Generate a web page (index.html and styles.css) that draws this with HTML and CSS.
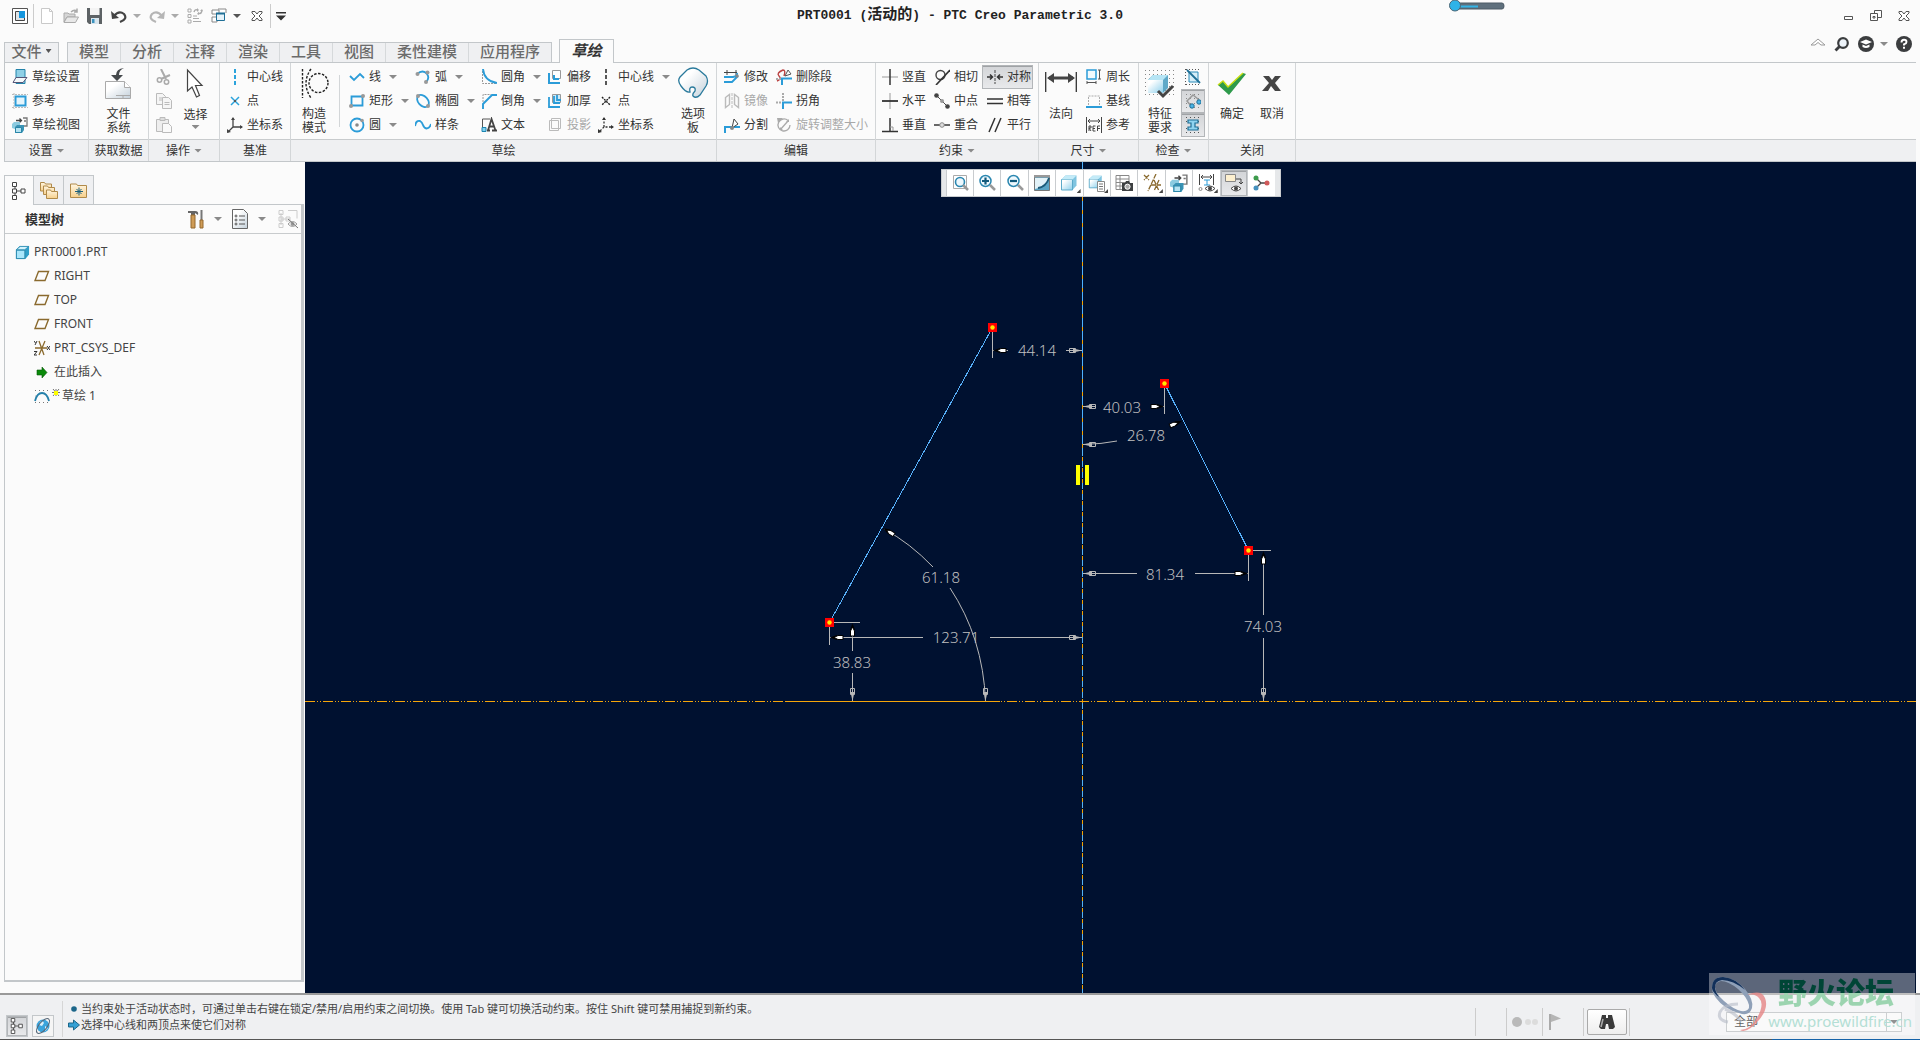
FILE: index.html
```html
<!DOCTYPE html>
<html lang="zh-CN">
<head>
<meta charset="utf-8">
<title>PRT0001 (活动的) - PTC Creo Parametric 3.0</title>
<link rel="stylesheet" href="styles.css">
</head>
<body>
<svg class="defs" aria-hidden="true">
  <defs>
    <linearGradient id="gPaper" x1="0" y1="0" x2="1" y2="1"><stop offset="0.3" stop-color="#fff"/><stop offset="1" stop-color="#c3d0da"/></linearGradient>
    <linearGradient id="gCube" x1="0" y1="0" x2="1" y2="1"><stop offset="0.2" stop-color="#fff"/><stop offset="1" stop-color="#8ed0ec"/></linearGradient>
    <linearGradient id="gFolder" x1="0" y1="0" x2="0" y2="1"><stop offset="0" stop-color="#fff6e2"/><stop offset="1" stop-color="#f6cf8a"/></linearGradient>
    <symbol id="cube" viewBox="0 0 18 18"><path d="M1.500 5.500l4-4h11v10l-4 4.500h-11z" fill="#7fc4e0"/><path d="M1.500 5.500h11v10.500h-11z" fill="url(#gCube)" stroke="#5ba9c9"/><path d="M1.500 5.500l4-4h11l-4 4z" fill="#c4ebf8"/></symbol>
    <symbol id="part" viewBox="0 0 16 16"><path d="M1 5l4-4h10v9l-4 5H1z" fill="#2f9fc9"/><path d="M1.500 5.500h9v9h-9z" fill="#a9e6fb" stroke="#2a87ac"/><path d="M1.500 5l4-3.500h9l-4 3.500z" fill="#d2f3fd" stroke="#2a87ac" stroke-width=".8"/></symbol>
    <symbol id="plane" viewBox="0 0 16 16"><path d="M4.500 3.500h10l-3.500 9h-10z" fill="none" stroke="#8a6a2e" stroke-width="1.400"/></symbol>
    <symbol id="treeicon" viewBox="0 0 14 18"><path d="M3 4v10M3 9h7" stroke="#444" fill="none"/><path d="M.5.500h4v4h-4zM.5 7h4v4h-4zM.5 13.500h4v4h-4zM9 7h4v4h-4z" fill="#fff" stroke="#444"/></symbol>
    <symbol id="views" viewBox="0 0 16 16"><path d="M4 3.500h5M7.500 1.500l2 2-2 2" stroke="#444" fill="none" stroke-width="1.300"/><path d="M11 1h4v8h-4M12 4h2" stroke="#777" fill="none" stroke-width="1.300"/><path d="M0 7l2-2h6v6l-2 2-6-2z" fill="#8ccbe0"/><path d="M3 10l2-2h7v5l-2 3H3z" fill="#3a93b5"/><path d="M3.500 10.500h6v5h-6z" fill="#b5e3f2" stroke="#2a86a8"/></symbol>
    <symbol id="csys" viewBox="0 0 16 16"><path d="M6 1v9M6 10h9M6 10l-5 5" stroke="#444" stroke-width="1.300" fill="none"/><path d="M6 0l2 3H4zM16 10l-3 2V8zM0 16v-4l4 3z" fill="#444"/></symbol>
    <g id="refArrow"><path d="M0 0L9-2V2z" fill="#b8b8b8"/><path d="M6.500-2h6v4h-6z" fill="none" stroke="#b8b8b8"/></g>
    <g id="dimArrow"><path d="M0 0L7-2.500V2.500z" fill="#000"/><path d="M4 0L8-2h5v4H8z" fill="#fff" stroke="#000"/></g>
  </defs>
</svg>

<header class="titlebar">
  <div class="qat">
    <button class="qb" aria-label="Creo"><svg class="i" viewBox="0 0 16 16"><path d="M.5.500h15v15H.5z" fill="#fff" stroke="#555"/><path d="M3.500 3.500h9v9h-9z" fill="#dfe3e6" stroke="#444"/><path d="M7 3h6v7H7z" fill="#1495dd"/></svg></button>
    <span class="vsep"></span>
    <button class="qb" aria-label="新建"><svg class="i" viewBox="0 0 16 16"><path d="M2.500.500h8l3 3v12h-11z" fill="#fff" stroke="#c9c9c9"/><path d="M10.500.500v3h3" fill="none" stroke="#c9c9c9"/></svg></button>
    <button class="qb open" aria-label="打开"><svg class="i" viewBox="0 0 16 16"><path d="M1 5h4l1 1h6v3H4l-3 5z" fill="#d6d6d6" stroke="#aaa"/><path d="M1 14.500l3-5.500h11.500l-3 5.500z" fill="#e8e8e8" stroke="#aaa"/><path d="M8 4q3-3 6-1M14 .5v3.500h-3" fill="none" stroke="#aaa" stroke-width="1.500"/></svg></button>
    <button class="qb save" aria-label="保存"><svg class="i" viewBox="0 0 16 16"><path d="M0 0h15v16H2l-2-2z" fill="#5d6265"/><path d="M3 0h9.500v7H3z" fill="#f4f4f4"/><path d="M4 10h8v6H4z" fill="#d9e6ee"/><path d="M5 11h2.500v4H5z" fill="#3b93c0"/></svg></button>
    <button class="qb" aria-label="撤消"><svg class="i" viewBox="0 0 16 16"><path d="M3 8q5-6 10-2 4 5-4 8" fill="none" stroke="#444" stroke-width="2.200"/><path d="M0 3l1 8 7-1z" fill="#444"/></svg><span class="caret lt"></span></button>
    <button class="qb" aria-label="重做"><svg class="i" viewBox="0 0 16 16"><path d="M13 8q-5-6-10-2-4 5 4 8" fill="none" stroke="#b5b5b5" stroke-width="2.200"/><path d="M16 3l-1 8-7-1z" fill="#b5b5b5"/></svg><span class="caret lt"></span></button>
    <button class="qb" aria-label="重新生成"><svg class="i" viewBox="0 0 16 16"><path d="M1 1h3v3H1zM1 6.500h3v3H1zM1 12h3v3H1zM6 8h4M6 13.500h8M6 10.500h6" stroke="#aaa" fill="none"/><path d="M7 4q1-3 3-2M15 3q-1 3-3 2.500" stroke="#aaa" fill="none" stroke-width="1.500"/><path d="M10 0v4l2-2zM12 7V3.500L10 6zM15 1l-2 2h3z" fill="#aaa"/></svg></button>
    <button class="qb win" aria-label="窗口"><svg class="i" viewBox="0 0 16 16"><path d="M1 2h7v4H1zM1 9h5v5H1zM7 1h8v4" fill="#fff" stroke="#888"/><path d="M5.500 5.500h8v7h-8z" fill="#e6f3fa" stroke="#1f6f96"/><path d="M5 4.500h9v2H5z" fill="#1f6f96"/></svg><span class="caret dk"></span></button>
    <button class="qb" aria-label="关闭"><svg class="i" viewBox="0 0 16 16"><path d="M3 3.500h3l2 2.500 2-2.500h3v1.500l-3 3 3 3v1.500h-3l-2-2.500-2 2.500H3V11l3-3-3-3z" fill="#fff" stroke="#555"/></svg></button>
    <span class="vsep"></span>
    <button class="qb" aria-label="自定义"><span class="caret barred"></span></button>
  </div>
  <h1 class="title">PRT0001 (<span class="cjk">活动的</span>) - PTC Creo Parametric 3.0</h1>
  <div class="slider"><svg viewBox="0 0 56 14" width="56" height="14"><path d="M8 3h45q2 0 2 3t-2 3H8z" fill="#5f707d" stroke="#4c5a66"/><path d="M8 5.500h21v2H8z" fill="#33b5e8"/><circle cx="6" cy="5.500" r="5.500" fill="#2fb3e8" stroke="#4c6675"/></svg></div>
  <div class="winctl">
    <button aria-label="最小化"><svg class="i" viewBox="0 0 16 16"><path d="M4.500 8.500h8v3h-8z" fill="#fff" stroke="#555"/></svg></button>
    <button aria-label="还原"><svg class="i" viewBox="0 0 16 16"><path d="M6.500 2.500h7v7h-7z" fill="#fff" stroke="#555"/><path d="M2.500 5.500h7v7h-7z" fill="#fff" stroke="#555"/><path d="M5 8.500h2v1.500H5z" fill="#fff" stroke="#555"/></svg></button>
    <button aria-label="关闭窗口"><svg class="i" viewBox="0 0 16 16"><path d="M3 3.500h3l2 2.500 2-2.500h3v1.500l-3 3 3 3v1.500h-3l-2-2.500-2 2.500H3V11l3-3-3-3z" fill="#fff" stroke="#555"/></svg></button>
  </div>
</header>

<nav class="tabrow">
  <button class="filetab">文件<span class="caret dk"></span></button>
  <div class="tabs" role="tablist">
    <button role="tab">模型</button><button role="tab">分析</button><button role="tab">注释</button><button role="tab">渲染</button><button role="tab">工具</button><button role="tab">视图</button><button role="tab">柔性建模</button><button role="tab">应用程序</button>
  </div>
  <button class="acttab" role="tab" aria-selected="true">草绘</button>
  <div class="helpers">
    <button aria-label="折叠功能区"><svg class="i" viewBox="0 0 16 16"><path d="M1 9l7-6 7 6h-4L8 6.500 5 9z" fill="#fff" stroke="#999"/></svg></button>
    <button aria-label="搜索"><svg class="i" viewBox="0 0 16 16"><circle cx="9" cy="7" r="4.800" fill="#eef4fa" stroke="#3b3d3f" stroke-width="2.200"/><path d="M5.500 10.500l-4 4" stroke="#3b3d3f" stroke-width="2.800"/></svg></button>
    <button class="learn" aria-label="学习"><svg class="i" viewBox="0 0 16 16"><circle cx="8" cy="8" r="8" fill="#3b3d3f"/><path d="M8 3.500l6 2.500-6 2.500L2 6zM4.500 8.500l3.500 1.500 3.500-1.500v2.500q-3.500 2-7 0z" fill="#fff"/></svg><span class="caret"></span></button>
    <button aria-label="帮助"><svg class="i" viewBox="0 0 16 16"><circle cx="8" cy="8" r="8" fill="#3b3d3f"/><path d="M5.500 6.500q0-2.700 2.500-2.700t2.500 2.200Q10.500 7.500 8 8.300v1.200" fill="none" stroke="#fff" stroke-width="1.900"/><path d="M7 10.800h2v2H7z" fill="#fff"/></svg></button>
  </div>
</nav>

<section class="ribbon">
  <div class="group g1"><div class="gbody"><div class="rows">
    <button class="cmd"><svg class="i" viewBox="0 0 16 16"><path d="M4 .5h9v14H4z" fill="#8fd0e6" stroke="#2383aa"/><path d="M4 8.500h11l-4 5H1z" fill="#f4f8fa" stroke="#557"/></svg>草绘设置</button>
    <button class="cmd"><svg class="i" viewBox="0 0 16 16"><path d="M3.500 3.500h10v9h-10z" fill="#e5f5fc" stroke="#2b9cd8" stroke-width="2"/><path d="M0 1.500h16M0 14.500h16M2 0v16" stroke="#bbb" stroke-dasharray="2 1" fill="none"/></svg>参考</button>
    <button class="cmd"><svg class="i"><use href="#views"/></svg>草绘视图</button>
  </div></div><button class="glabel">设置<span class="caret"></span></button></div>

  <div class="group g2"><div class="gbody">
    <button class="big"><svg class="bi" viewBox="0 0 32 32"><path d="M2.500 14.500h19l6 6v11h-25z" fill="url(#gPaper)" stroke="#aaa"/><path d="M21.500 14.500v6h6" fill="#fff" stroke="#aaa"/><path d="M13 28.500h15M20 28.500v3" stroke="#aaa"/><path d="M21 1Q13 2 13 8H8l6 6 6-6h-4q0-5 5-7z" fill="#45494c"/></svg>文件<br>系统</button>
  </div><div class="glabel">获取数据</div></div>

  <div class="group g3"><div class="gbody"><div class="rows">
    <button class="cmd" aria-label="剪切"><svg class="i" viewBox="0 0 16 16"><path d="M5 0l5 10M14 6L5 10" stroke="#aaa" stroke-width="2"/><circle cx="3.500" cy="11" r="2.200" fill="none" stroke="#aaa" stroke-width="1.500"/><circle cx="10.500" cy="13" r="2.200" fill="none" stroke="#aaa" stroke-width="1.500"/></svg></button>
    <button class="cmd" aria-label="复制"><svg class="i" viewBox="0 0 16 16"><path d="M.5.500h6l3 3v8h-9z" fill="#f5f5f5" stroke="#bbb"/><path d="M6.500 4.500h6l3 3v8h-9z" fill="#f5f5f5" stroke="#bbb"/><path d="M3 5h3M3 7h3M8.500 9.500h5M8.500 11.500h5" stroke="#bbb"/></svg></button>
    <button class="cmd" aria-label="粘贴"><svg class="i" viewBox="0 0 16 16"><path d="M.5 2.500h12v12H.5z" fill="#eee" stroke="#bbb"/><path d="M4 .5h5v3H4z" fill="#ddd" stroke="#bbb"/><path d="M6.500 6.500h6l3 3v6h-9z" fill="#fafafa" stroke="#bbb"/></svg></button>
    </div>
    <button class="big sel"><svg class="bi" viewBox="0 0 32 32"><path d="M7.500 3v21l4.500-4 4.500 10 3-1.500L15.500 18.500H22z" fill="#fff" stroke="#444" stroke-width="1.200"/></svg>选择<span class="caret"></span></button>
  </div><button class="glabel">操作<span class="caret"></span></button></div>

  <div class="group g4"><div class="gbody"><div class="rows">
    <button class="cmd"><svg class="i" viewBox="0 0 16 16"><path d="M8 0v16" stroke="#2ba3dc" stroke-width="2" stroke-dasharray="4 2"/></svg>中心线</button>
    <button class="cmd"><svg class="i" viewBox="0 0 16 16"><path d="M4 4l8 8M12 4l-8 8" stroke="#2ba3dc" stroke-width="1.500"/><path d="M7 7h2v2H7z" fill="#555"/></svg>点</button>
    <button class="cmd"><svg class="i"><use href="#csys"/></svg>坐标系</button>
  </div></div><div class="glabel">基准</div></div>

  <div class="group g5"><div class="gbody">
    <button class="big cons"><svg class="bi" viewBox="0 0 32 32"><g fill="none" stroke="#222" stroke-width="1.400" stroke-dasharray="2.500 1.500"><path d="M4.500 2v29M13 2q-10 14 0 29"/><circle cx="20.500" cy="16" r="9.500"/></g></svg>构造<br>模式</button>
    <span class="gsep"></span>
    <div class="rows sk">
      <button class="cmd"><svg class="i" viewBox="0 0 16 16"><path d="M1 7l4 4 6-6 4 4" fill="none" stroke="#2b9cd8" stroke-width="1.800"/></svg>线<span class="caret"></span></button>
      <button class="cmd"><svg class="i" viewBox="0 0 16 16"><path d="M2.500 3.500h11v9h-11z" fill="none" stroke="#2b9cd8" stroke-width="1.800"/><circle cx="2" cy="13" r="2" fill="#999"/><circle cx="14" cy="3" r="2" fill="#999"/></svg>矩形<span class="caret"></span></button>
      <button class="cmd"><svg class="i" viewBox="0 0 16 16"><circle cx="8" cy="8" r="6.500" fill="none" stroke="#2b9cd8" stroke-width="1.800"/><circle cx="8" cy="8" r="1.800" fill="#888"/><circle cx="13" cy="3.500" r="1.800" fill="#999"/></svg>圆<span class="caret"></span></button>
      <button class="cmd"><svg class="i" viewBox="0 0 16 16"><path d="M2 5q6-5 10 0 3 4-1 8" fill="none" stroke="#2b9cd8" stroke-width="1.800"/><circle cx="2.500" cy="5" r="2" fill="#999"/><circle cx="12.500" cy="3.500" r="2" fill="#999"/><circle cx="11" cy="13" r="2" fill="#999"/></svg>弧<span class="caret"></span></button>
      <button class="cmd"><svg class="i" viewBox="0 0 16 16"><ellipse cx="8" cy="8" rx="7" ry="4.800" transform="rotate(48 8 8)" fill="none" stroke="#2b9cd8" stroke-width="1.800"/><circle cx="3" cy="3" r="2" fill="#999"/><circle cx="13" cy="13" r="2" fill="#999"/></svg>椭圆<span class="caret"></span></button>
      <button class="cmd"><svg class="i" viewBox="0 0 16 16"><path d="M0 9q1-6 5-5 2 1 3 4t3.500 3.500Q15 11 16 7" fill="none" stroke="#2b9cd8" stroke-width="1.900"/></svg>样条</button>
      <button class="cmd"><svg class="i" viewBox="0 0 16 16"><path d="M1.500 2v12.500H16" stroke="#999" stroke-dasharray="2 1" fill="none"/><path d="M2 0q1 12 14 14" fill="none" stroke="#2b9cd8" stroke-width="1.900"/></svg>圆角<span class="caret"></span></button>
      <button class="cmd"><svg class="i" viewBox="0 0 16 16"><path d="M2 9V1.500h8" stroke="#999" stroke-dasharray="2 1" fill="none"/><path d="M2 16V11L11 2h5" fill="none" stroke="#2b9cd8" stroke-width="1.900"/></svg>倒角<span class="caret"></span></button>
      <button class="cmd"><svg class="i" viewBox="0 0 16 16"><path d="M1.500 11V2H9" stroke="#555" fill="none"/><path d="M1 10.500h4v4H1z" fill="#7fd0f0" stroke="#1d84b0"/><path d="M6 13.500h3M11 13.500h5M7 13.500L10.500 2l4 11.500M8 9.500h5" stroke="#444" stroke-width="1.800" fill="none"/></svg>文本</button>
      <button class="cmd"><svg class="i" viewBox="0 0 16 16"><path d="M5.500 1.500h8v8h-8z" fill="#fff" stroke="#999"/><path d="M2 4v10h11M7 6v4h5" fill="none" stroke="#2b9cd8" stroke-width="2"/></svg>偏移</button>
      <button class="cmd"><svg class="i" viewBox="0 0 16 16"><path d="M5.500 1.500h8v8h-8z" fill="#cdeaf7" stroke="#999"/><path d="M2 4v10h11M7 3v7h6M10 2v5h4" fill="none" stroke="#2b9cd8" stroke-width="1.800"/></svg>加厚</button>
      <button class="cmd" disabled><svg class="i" viewBox="0 0 16 16"><path d="M2.500 3.500h9v10h-9zM4.500 1.500h9v10h-9z" fill="none" stroke="#bbb"/></svg>投影</button>
      <button class="cmd"><svg class="i" viewBox="0 0 16 16"><path d="M8 0v16" stroke="#222" stroke-width="1.500" stroke-dasharray="4 2"/></svg>中心线<span class="caret"></span></button>
      <button class="cmd"><svg class="i" viewBox="0 0 16 16"><path d="M4 4l8 8M12 4l-8 8" stroke="#222" stroke-width="1.400" stroke-dasharray="2 1"/></svg>点</button>
      <button class="cmd"><svg class="i" viewBox="0 0 16 16"><path d="M6 1v9h9M6 10l-5 5" stroke="#333" stroke-dasharray="2 1.500" stroke-width="1.300" fill="none"/><path d="M6 0l2 3H4zM16 10l-3 2V8zM0 16v-4l4 3z" fill="#333"/></svg>坐标系</button>
    </div>
    <button class="big pal"><svg class="bi" viewBox="0 0 32 32"><path d="M10 3q6-4 12 0l7 6q3 5 0 10l-6 9q-4 4-7 1-1-2 2-5 1-4-3-4-3 0-2 5-4 1-9-6-4-5-1-9z" fill="url(#gPaper)" stroke="#2a7a9c" stroke-width="1.300"/></svg>选项<br>板</button>
  </div><div class="glabel">草绘</div></div>

  <div class="group g6"><div class="gbody"><div class="rows ed">
    <button class="cmd"><svg class="i" viewBox="0 0 16 16"><path d="M0 3.500h13M3 1v5M12 1v5" stroke="#444" fill="none"/><path d="M0 8h9q5-1 4-4M0 13h8l6-6" stroke="#2b9cd8" stroke-width="1.800" fill="none"/><circle cx="13" cy="7" r="1.800" fill="#888"/></svg>修改</button>
    <button class="cmd" disabled><svg class="i" viewBox="0 0 16 16"><path d="M1.500 4.500l4-3v10l-4 3zM14.500 4.500l-4-3v10l4 3z" fill="none" stroke="#bbb" stroke-width="1.400"/><path d="M8 0v16" stroke="#bbb" stroke-dasharray="3 1"/></svg>镜像</button>
    <button class="cmd"><svg class="i" viewBox="0 0 16 16"><path d="M1 16V10h15" fill="none" stroke="#2b9cd8" stroke-width="2"/><path d="M8 11l2-9 4 5z" fill="#fff" stroke="#444"/><circle cx="8" cy="11" r="2" fill="#888"/></svg>分割</button>
    <button class="cmd"><svg class="i" viewBox="0 0 16 16"><path d="M6 16V9.500h10" fill="none" stroke="#2b9cd8" stroke-width="2"/><path d="M1 12q5-2 2-5T7 1q3 0 1 6" fill="none" stroke="#b44" stroke-width="1.400"/><path d="M9 7l3-6 3 4z" fill="#fff" stroke="#555"/><path d="M0 10h5" stroke="#aaa" stroke-width="2" stroke-dasharray="2 1"/></svg>删除段</button>
    <button class="cmd"><svg class="i" viewBox="0 0 16 16"><path d="M7 0v8M0 9.500h6" stroke="#aaa" stroke-width="2" stroke-dasharray="2 1"/><path d="M7 16V9.500h9" fill="none" stroke="#2b9cd8" stroke-width="2"/></svg>拐角</button>
    <button class="cmd" disabled><svg class="i" viewBox="0 0 16 16"><path d="M12 3.500A6 6 0 1 0 14 8M4 13l8-9" fill="none" stroke="#aaa" stroke-width="1.300"/><path d="M1 1h6L2 6zM13 5l-3 0 3-3zM4 13h3l-3-3z" fill="#aaa"/></svg>旋转调整大小</button>
  </div></div><div class="glabel">编辑</div></div>

  <div class="group g7"><div class="gbody"><div class="rows co">
    <button class="cmd"><svg class="i" viewBox="0 0 16 16"><path d="M0 8h16" stroke="#999"/><path d="M8 0v16" stroke="#333" stroke-width="1.500"/></svg>竖直</button>
    <button class="cmd"><svg class="i" viewBox="0 0 16 16"><path d="M8 0v16" stroke="#999"/><path d="M0 8h16" stroke="#333" stroke-width="1.800"/></svg>水平</button>
    <button class="cmd"><svg class="i" viewBox="0 0 16 16"><path d="M8 1v13M0 14.500h16" stroke="#333" stroke-width="1.500"/><path d="M8 10h3v4" stroke="#999" fill="none"/></svg>垂直</button>
    <button class="cmd"><svg class="i" viewBox="0 0 16 16"><circle cx="6.500" cy="6" r="4.500" fill="none" stroke="#444" stroke-width="1.400"/><path d="M2 16L16 1" stroke="#333" stroke-width="1.600"/></svg>相切</button>
    <button class="cmd"><svg class="i" viewBox="0 0 16 16"><path d="M2 2l12 12" stroke="#444"/><circle cx="2.500" cy="2.500" r="2.300" fill="#444"/><circle cx="8" cy="8" r="2" fill="#999"/><circle cx="13.500" cy="13.500" r="2.300" fill="#444"/></svg>中点</button>
    <button class="cmd"><svg class="i" viewBox="0 0 16 16"><path d="M0 8h16" stroke="#444" stroke-width="1.600"/><circle cx="8" cy="8" r="2.300" fill="#ddd" stroke="#888"/></svg>重合</button>
    <button class="cmd on"><svg class="i" viewBox="0 0 16 16"><path d="M8 1v14" stroke="#444" stroke-dasharray="3 1"/><path d="M0 8h5M11 8h5M3 5.500L5.500 8 3 10.500M13 5.500L10.500 8l2.500 2.500" stroke="#333" fill="none" stroke-width="1.500"/></svg>对称</button>
    <button class="cmd"><svg class="i" viewBox="0 0 16 16"><path d="M0 6h16M0 10.500h16" stroke="#333" stroke-width="1.500"/></svg>相等</button>
    <button class="cmd"><svg class="i" viewBox="0 0 16 16"><path d="M2 15L8 1M8 15l6-14" stroke="#333" stroke-width="1.500"/></svg>平行</button>
  </div></div><button class="glabel">约束<span class="caret"></span></button></div>

  <div class="group g8"><div class="gbody">
    <button class="big nrm"><svg class="bi" viewBox="0 0 32 32"><path d="M.7 5v20M31.300 5v20" stroke="#333" stroke-width="1.300"/><path d="M4 11h24" stroke="#444" stroke-width="3"/><path d="M2 11l7-5v10zM30 11l-7-5v10z" fill="#444"/></svg>法向</button>
    <div class="rows">
    <button class="cmd"><svg class="i" viewBox="0 0 16 16"><path d="M1 1h9v9H1z" fill="#f2fafd" stroke="#2b9cd8" stroke-width="1.500"/><path d="M13.500 1v9M12 1h3M12 10h3M1 13.500h9M1 12v3M10 12v3" stroke="#555"/></svg>周长</button>
    <button class="cmd"><svg class="i" viewBox="0 0 16 16"><path d="M2.500 12V3h11v9" fill="none" stroke="#aaa" stroke-dasharray="2 1"/><path d="M0 14h16" stroke="#2b9cd8" stroke-width="2"/></svg>基线</button>
    <button class="cmd"><svg class="i" viewBox="0 0 16 16"><path d="M.5 0v16M15.500 0v16M2 4h12M4 2L2 4l2 2M12 2l2 2-2 2" stroke="#444" fill="none"/><path d="M3 14V9h2v2H3l2 3M9.500 9h-2.500v5h2.500M7 11.500h2M11.500 14V9h2.500M11.500 11.500H14" stroke="#444" fill="none"/></svg>参考</button>
    </div>
  </div><button class="glabel">尺寸<span class="caret"></span></button></div>

  <div class="group g9"><div class="gbody">
    <button class="big feat"><svg class="bi" viewBox="0 0 32 32"><path d="M1 3.500h30M1 7.500h30M1 11.500h30M1 15.500h30M1 19.500h30M1 23.500h30M1 27.500h30" stroke="#888" stroke-dasharray="1 3"/><path d="M4 13l5-5h15v13l-5 5H4z" fill="#5fa9c8"/><path d="M4 13h15v13H4z" fill="url(#gCube)"/><path d="M4 13l5-5h15l-5 5z" fill="#b6e5f5"/><path d="M14 24l5 5 10-10" fill="none" stroke="#444" stroke-width="3"/></svg>特征<br>要求</button>
    <div class="rows tri">
      <button class="cmd" aria-label="重叠几何"><svg class="i" viewBox="0 0 16 16"><path d="M1 .5h15M1 15.500h15M.5 0v16" stroke="#555" stroke-dasharray="1 2"/><path d="M4 3h9v10H4z" fill="#d5eef8" stroke="#2b8ab8"/><path d="M2 1l13 13" stroke="#1f6f96" stroke-width="1.800"/></svg></button>
      <button class="cmd on" aria-label="突出显示开放端"><svg class="i" viewBox="0 0 16 16"><path d="M1 1.500h15M1 5.500h15M1 10.500h15M1 14.500h15" stroke="#888" stroke-dasharray="1 3"/><path d="M7 14L2 8l6-6 5 4v3" fill="none" stroke="#999" stroke-width="1.500"/><circle cx="7" cy="13" r="2.200" fill="#4ab4e6" stroke="#1f6f96"/><circle cx="14" cy="9" r="2.200" fill="#4ab4e6" stroke="#1f6f96"/></svg></button>
      <button class="cmd on" aria-label="着色封闭环"><svg class="i" viewBox="0 0 16 16"><path d="M1 .5h15M1 4.500h15M1 11.500h15M1 15.500h15" stroke="#555" stroke-dasharray="1 3"/><path d="M3 3h10v3h-3v4h3v3H3v-3h3V6H3z" fill="#8fd4f0" stroke="#1f6f96" stroke-width="1.200"/></svg></button>
    </div>
  </div><button class="glabel">检查<span class="caret"></span></button></div>

  <div class="group g10"><div class="gbody">
    <button class="big ok"><svg class="bi" viewBox="0 0 32 32"><path d="M2 18l5-4 5 6L27 6l3 1L13 28z" fill="#2e9a4b"/><path d="M2 18l5-4 5 6L27 6" fill="none" stroke="#c7dd12" stroke-width="1.500"/></svg>确定</button>
    <button class="big ok"><svg class="bi" viewBox="0 0 32 32"><path d="M7 9h6l3 4 3-4h6l-6 7 6 8h-6l-4-5-3 5H6l7-8z" fill="#454545"/></svg>取消</button>
  </div><div class="glabel">关闭</div></div>
  <div class="group rest"><div class="gbody"></div><div class="glabel"></div></div>
</section>

<main class="work">
  <aside class="side">
    <div class="stabs" role="tablist">
      <button class="cur" role="tab" aria-label="模型树"><svg width="14" height="20"><use href="#treeicon"/></svg></button>
      <button role="tab" aria-label="文件夹浏览器"><svg viewBox="0 0 20 20" width="20" height="20"><g fill="url(#gFolder)" stroke="#b08a4a"><path d="M1.500 2.500h4l1 1.500h6v7h-11z"/><path d="M4.500 6h4l1 1.500h6v7h-11z"/><path d="M7.500 10h4l1 1.500h6v7h-11z"/></g></svg></button>
      <button role="tab" aria-label="收藏夹"><svg viewBox="0 0 20 20" width="20" height="20"><path d="M1.500 4h6l1 1.500h9v12h-16z" fill="url(#gFolder)" stroke="#b08a4a"/><path d="M10 7.500v8M6 11.500h8M7.500 9l5 5M12.500 9l-5 5" stroke="#1b607c"/></svg></button>
    </div>
    <div class="panel">
      <div class="phead"><h2>模型树</h2>
        <button aria-label="设置"><svg viewBox="0 0 18 20" width="18" height="20"><path d="M1 2h7q4 0 3 4l-3-2v2H4V4H1z" fill="#666"/><path d="M4 6h4v13H4z" fill="#cf9c57" stroke="#94682e"/><path d="M14.500 1v10" stroke="#777" stroke-width="2"/><path d="M13 11h3v8h-3z" fill="#cf9c57" stroke="#94682e"/></svg><span class="caret"></span></button>
        <button aria-label="显示"><svg viewBox="0 0 18 20" width="18" height="20"><path d="M1.500.500h11l4 4v15h-15z" fill="url(#gPaper)" stroke="#666"/><g fill="none" stroke="#555"><circle cx="5" cy="7" r="1"/><circle cx="5" cy="11" r="1"/><circle cx="5" cy="15" r="1"/><path d="M8 7h6M8 11h6M8 15h6"/></g></svg><span class="caret"></span></button>
        <button aria-label="隐藏"><svg viewBox="0 0 20 20" width="20" height="20"><path d="M3 4v12M3 10h9M1 1.500h4v4H1zM1 8h4v4H1zM1 14.500h4v4H1zM8 8h4v4H8zM10 1.500h9v8" fill="none" stroke="#ccc"/><path d="M10 15q4.500-5 9 0-4.500 5-9 0z" fill="#fff" stroke="#999"/><circle cx="14.500" cy="15" r="2" fill="#999"/><path d="M10 10l10 9" stroke="#777"/></svg></button>
      </div>
      <ul class="tree">
        <li class="root"><svg width="15" height="15"><use href="#part"/></svg>PRT0001.PRT</li>
        <li><svg class="i"><use href="#plane"/></svg>RIGHT</li>
        <li><svg class="i"><use href="#plane"/></svg>TOP</li>
        <li><svg class="i"><use href="#plane"/></svg>FRONT</li>
        <li><svg class="i" viewBox="0 0 16 16"><path d="M1 8h12M5 1l5 14M11 1L5 15" stroke="#8a6a2e" stroke-width="1.300"/><path d="M0 1l1.500 2M3 1L1 5M0 11.500h3L0 15h3M13 6l3 4M16 6l-3 4" stroke="#333" fill="none"/></svg>PRT_CSYS_DEF</li>
        <li><svg class="i" viewBox="0 0 16 16"><path d="M3 6h5V3l5 5.500L8 14v-3H3z" fill="#0a8a0a" stroke="#065806" stroke-width=".6"/></svg>在此插入</li>
        <li class="sketch"><svg class="i" viewBox="0 0 16 16"><path d="M1 2.500h15M1 14.500h15M1.500 8h1" stroke="#777" stroke-dasharray="1 3"/><path d="M1 13Q3 5 8 5t7 8" fill="none" stroke="#2580aa" stroke-width="1.800"/></svg><svg class="star" viewBox="0 0 8 16"><path d="M1 1l6 7M7 1L1 8M4 1v7M0 4.500h8" stroke="#777"/><path d="M2 3h4v4H2z" fill="#ff0"/></svg>草绘 1</li>
      </ul>
    </div>
  </aside>

  <section class="canvas">
    <svg class="drawing" viewBox="305 162 1611 831" preserveAspectRatio="xMidYMid meet">
      <g fill="none" shape-rendering="crispEdges">
        <path d="M305 701.500H1916" stroke="#f5a50a" stroke-dasharray="10 2 1 2 1 2"/>
        <path d="M786 701.500H1000" stroke="#f5a50a"/>
        <path d="M1082.500 162V993" stroke="#f5a300"/>
        <path d="M1082.500 162V450" stroke="#4fb2ff" stroke-dasharray="9 4"/>
        <path d="M1082.500 450V993" stroke="#55b2f5" stroke-dasharray="6 5"/>
        <path d="M1082.500 450V993" stroke="#001130" stroke-dasharray="1 10" stroke-dashoffset="-6"/>
        <path d="M992.500 327.500L829.500 622.500M1164.500 383.500L1248.500 550.500" stroke="#57b0fa"/>
        <g stroke="#b8b8b8">
          <path d="M992.500 327V358M992 350.500H1008M1066 350.500H1082"/>
          <path d="M1164.500 384V414M1083 406.500H1095M1152 406.500H1164"/>
          <path d="M1248.500 551V581M1083 573.500H1137M1195 573.500H1248M1249 550.500H1271"/>
          <path d="M1263.500 552V615M1263.500 638V701"/>
          <path d="M829.500 622V645M830 622.500H860M830 637.500H923M990 637.500H1082"/>
          <path d="M852.500 624V651M852.500 673V701"/>
        </g>
      </g>
      <g fill="none" stroke="#b8b8b8">
        <path d="M884 529Q910 543 933 567M950 588Q983 638 985.500 701"/>
        <path d="M1083 444.500Q1102 444 1117 441"/>
      </g>
      <use href="#refArrow" transform="translate(1082 350.500) rotate(180)"/>
      <use href="#refArrow" transform="translate(1083 406.500)"/>
      <use href="#refArrow" transform="translate(1083 444.500)"/>
      <use href="#refArrow" transform="translate(1083 573.500)"/>
      <use href="#refArrow" transform="translate(1082 637.500) rotate(180)"/>
      <use href="#refArrow" transform="translate(852.500 701) rotate(-90)"/>
      <use href="#refArrow" transform="translate(985.500 701) rotate(-90)"/>
      <use href="#refArrow" transform="translate(1263.500 701) rotate(-90)"/>
      <use href="#dimArrow" transform="translate(993 350.500)"/>
      <use href="#dimArrow" transform="translate(1164 406.500) rotate(180)"/>
      <use href="#dimArrow" transform="translate(1248 573.500) rotate(180)"/>
      <use href="#dimArrow" transform="translate(830 637.500)"/>
      <use href="#dimArrow" transform="translate(852.500 623) rotate(90)"/>
      <use href="#dimArrow" transform="translate(1263.500 551) rotate(90)"/>
      <use href="#dimArrow" transform="translate(883 528) rotate(32)"/>
      <use href="#dimArrow" transform="translate(1182 421) rotate(158)"/>
      <g fill="#f00"><path d="M988 323h9v9h-9zM825 618h9v9h-9zM1160 379h9v9h-9zM1244 546h9v9h-9z"/></g>
      <g fill="#ffe800"><circle cx="992.500" cy="327.500" r="2.200"/><circle cx="829.500" cy="622.500" r="2.200"/><circle cx="1164.500" cy="383.500" r="2.200"/><circle cx="1248.500" cy="550.500" r="2.200"/></g>
      <path d="M1076 465h4v20h-4zM1085 465h4v20h-4z" fill="#ff0"/>
      <g class="dims">
        <text x="1037" y="356">44.14</text><text x="1122" y="413">40.03</text><text x="1146" y="441">26.78</text><text x="941" y="583">61.18</text><text x="1165" y="580">81.34</text><text x="1263" y="632">74.03</text><text x="956" y="643">123.71</text><text x="852" y="668">38.83</text>
      </g>
    </svg>
    <div class="gtool" role="toolbar">
      <button aria-label="重新调整"><svg viewBox="0 0 18 18"><path d="M2.500 1.500h13v13h-13z" fill="#fff" stroke="#aaa"/><circle cx="9" cy="8" r="4.500" fill="#eef8fd" stroke="#2b87b0" stroke-width="1.600"/><path d="M12 11l5 5" stroke="#999" stroke-width="2.500"/></svg></button>
      <button aria-label="放大"><svg viewBox="0 0 18 18"><circle cx="7.500" cy="7" r="5.500" fill="#eef8fd" stroke="#2b87b0" stroke-width="1.500"/><path d="M4 7h7M7.500 3.500v7" stroke="#125a7c" stroke-width="2.200"/><path d="M12 11l5 5" stroke="#999" stroke-width="2.500"/></svg></button>
      <button aria-label="缩小"><svg viewBox="0 0 18 18"><circle cx="7.500" cy="7" r="5.500" fill="#eef8fd" stroke="#2b87b0" stroke-width="1.500"/><path d="M4 7h7" stroke="#125a7c" stroke-width="2.200"/><path d="M12 11l5 5" stroke="#999" stroke-width="2.500"/></svg></button>
      <button aria-label="重画"><svg viewBox="0 0 18 18"><path d="M1.500 1.500h15v15h-15z" fill="#5aa4c4" stroke="#777"/><path d="M2 4h14Q11 13 2 15z" fill="#e2f2f8"/><path d="M16 4Q13 13 5 14" stroke="#1c5a78" stroke-width="1.800" fill="none"/><path d="M1 1h16v2.500H1z" fill="#999"/></svg></button>
      <button class="more" aria-label="显示样式"><svg><use href="#cube"/></svg></button>
      <button class="more" aria-label="已保存方向"><svg viewBox="0 0 18 18"><use href="#cube" width="15" height="16"/><path d="M9.500 7.500h7v10h-7z" fill="#fff" stroke="#888"/><path d="M11 10h4M11 12.500h4M11 15h4" stroke="#777"/></svg></button>
      <button aria-label="视图管理器"><svg viewBox="0 0 18 18"><path d="M1 1.500h13v14H1zM1 5h13M1 8.500h13M1 12h8M5 2v13" fill="#fff" stroke="#888"/><path d="M7 9h3l1-2h3l1 2h3v8H7z" fill="#3c3f41"/><circle cx="12.500" cy="12.700" r="2.600" fill="#aaa" stroke="#fff"/></svg></button>
      <button class="more" aria-label="基准显示"><svg viewBox="0 0 18 18"><path d="M1 1l5 5M6 1L1 6M13 0L5 17M8 11h10M11 6l5 11M16 6l-5 11" stroke="#8a6a2e" stroke-width="1.300" stroke-dasharray="5 1" fill="none"/></svg></button>
      <button aria-label="视图"><svg><use href="#views"/></svg></button>
      <button class="more" aria-label="草绘显示"><svg viewBox="0 0 18 18"><path d="M1.500 0v11M15.500 0v11M3 3h11M5 1L3 3l2 2M12 1l2 2-2 2" stroke="#444" fill="none"/><path d="M6 6h6M9 6v5M6 11h6" stroke="#2b9cd8"/><circle cx="2.500" cy="15" r="1.500" fill="none" stroke="#888"/><path d="M7 14.500q5-5 10 0-5 5-10 0z" fill="#fff" stroke="#444"/><circle cx="12" cy="14.500" r="2" fill="#444"/></svg></button>
      <button class="on" aria-label="注释显示"><svg viewBox="0 0 18 18"><path d="M.5.500h10v7H.5z" fill="#fdf0cf" stroke="#888"/><path d="M11 5h5v5M14 8l2 2 2-2" stroke="#444" fill="none"/><path d="M6 14.500q5-5 10 0-5 5-10 0z" fill="#fff" stroke="#444"/><circle cx="11" cy="14.500" r="2" fill="#444"/></svg></button>
      <button aria-label="旋转中心"><svg viewBox="0 0 18 18"><path d="M4 4l5 5M4 14l5-5M9 9h5" stroke="#444" stroke-width="1.300"/><circle cx="4" cy="4" r="2.500" fill="#3d9b4c"/><circle cx="4" cy="14" r="2.500" fill="#4590bd"/><circle cx="15" cy="9" r="2.500" fill="#d05a5a"/></svg></button>
    </div>
  </section>
</main>

<footer class="status">
  <div class="sbtns">
    <button class="on" aria-label="显示导航器"><svg width="14" height="16"><use href="#treeicon"/></svg></button>
    <button aria-label="显示浏览器"><svg viewBox="0 0 18 18" width="18" height="18"><circle cx="9" cy="9" r="6.500" fill="#3aa4dc"/><path d="M6 5q3-2 4 1l-2 3-3-1zM11 9l3 2-3 3z" fill="#d9f0fb"/><ellipse cx="9" cy="9" rx="9" ry="4" transform="rotate(-50 9 9)" fill="none" stroke="#567"/></svg></button>
  </div>
  <div class="msgs">
    <p><svg viewBox="0 0 12 12" width="12" height="12"><circle cx="6" cy="6" r="2.800" fill="#1c6689"/></svg>当约束处于活动状态时，可通过单击右键在锁定/禁用/启用约束之间切换。使用 Tab 键可切换活动约束。按住 Shift 键可禁用捕捉到新约束。</p>
    <p><svg viewBox="0 0 12 12" width="12" height="12"><path d="M.5 4h5V1l6 5-6 5V8h-5z" fill="#35a0d4" stroke="#1c6689"/></svg>选择中心线和两顶点来使它们对称</p>
  </div>
  <div class="sright">
    <span class="cell c1"></span>
    <span class="cell c2"><svg viewBox="0 0 28 12" width="28" height="12"><circle cx="6" cy="6" r="5" fill="#b9b9b9"/><circle cx="17" cy="6" r="3" fill="#dcdcdc"/><circle cx="24" cy="6" r="3" fill="#dcdcdc"/></svg></span>
    <span class="cell c3"><svg class="i" viewBox="0 0 16 16"><path d="M1 0h2v16H1z" fill="#aaa"/><path d="M3 0l10 4.500L3 8z" fill="#b5b5b5"/></svg></span>
    <span class="cell c4"><button class="find" aria-label="查找"><svg class="i" viewBox="0 0 16 16"><path d="M3 1h4v3h2V1h4l3 12-2 2h-4l-1-5H7l-1 5H2l-2-2z" fill="#3a3a3a"/><path d="M4 5L2 13" stroke="#aaa" stroke-width="1.500"/></svg></button></span>
    <span class="pick"><select class="filter" aria-label="选择过滤器"><option>全部</option></select><span class="drop"><span class="caret dk"></span></span></span>
  </div>
</footer>

<div class="mark">
  <svg class="rings" viewBox="0 0 58 58" width="58" height="58"><path fill-rule="evenodd" d="M2 10Q3 1 13 1q12 1 22 12 9 11 7 19-3 9-13 5Q14 33 6 22 1 15 2 10zM5 11q0 6 9 14 9 8 17 10 9 1 8-6-2-8-11-16Q18 5 11 5q-6 1-6 6z" fill="#8fa0b8"/><path d="M2 12Q2 1 13 1q13 1 22 13Q23 4 12 4q-8 1-7 9 1 4 4 8-7-5-7-9z" fill="#12305a"/><path d="M28 28q-14 0-18 8-3 8 8 10M15 33q12 5 16 13" stroke="#b5bac6" stroke-width="3" fill="none" opacity=".6"/><path d="M37 19q14-6 18 3 4 10-6 22-12 14-19 10 10 0 17-12 8-14 2-20-4-5-12-3z" fill="#e58585" opacity=".8"/></svg>
  <div class="mtext"><strong>野火论坛</strong><a href="#">www.proewildfire.cn</a></div>
</div>
</body>
</html>
```
FILE: styles.css
```css
* { box-sizing: border-box; }
html, body { height: 100%; }
body {
  margin: 0;
  display: flex;
  flex-direction: column;
  min-width: 1400px;
  background: #fbfbfb;
  color: #333;
  font: 12px/16px "Noto Sans", "Noto Sans CJK SC", sans-serif;
  overflow: hidden;
}
button { padding: 0; border: 0; background: none; color: inherit; font: inherit; white-space: nowrap; }
button:disabled { color: #a8a8a8; }
.defs { position: absolute; width: 0; height: 0; }
.i { width: 16px; height: 16px; flex: none; }
.caret {
  display: inline-block;
  flex: none;
  width: 8px;
  height: 4px;
  background: #8a8a8a;
  clip-path: polygon(0 0, 100% 0, 50% 100%);
}
.caret.dk { background: #555; }
.caret.lt { background: #aaa; }
.caret.barred { width: 10px; height: 9px; background: #333; clip-path: polygon(0 0, 100% 0, 100% 2px, 0 2px, 0 4px, 100% 4px, 50% 100%, 0 4px); }

/* title bar */
.titlebar { display: grid; grid-template-columns: 1fr auto 1fr; grid-template-rows: 32px; align-items: center; flex: none; position: relative; }
.qat { display: flex; align-items: center; padding-left: 12px; gap: 8px; grid-column: 1; }
.qb { display: flex; align-items: center; gap: 6px; }
.qat .vsep { width: 1px; height: 24px; background: #ccc; margin: 0 -3px; }
.title { margin: 0; font: bold 13px/16px "Liberation Mono", "Noto Sans CJK SC", monospace; color: #222; grid-column: 2; }
.title .cjk { font-size: 15px; }
.winctl { display: flex; gap: 12px; justify-self: end; padding-right: 8px; grid-column: 3; }
.winctl button { height: 16px; }
.slider { position: absolute; top: 0; right: 415px; height: 14px; }

/* ribbon tabs */
.tabrow { display: flex; align-items: flex-end; flex: none; height: 30px; padding: 0 4px; color: #6b6b6b; font-size: 15px; line-height: 16px; font-weight: 500; }
.filetab, .tabs { height: 20px; border: 1px solid #c3c7ca; border-bottom: 0; background: #eff0f2; }
.filetab { width: 55px; margin-right: 8px; padding-bottom: 3px; display: flex; align-items: center; justify-content: center; gap: 4px; }
.filetab .caret { width: 6px; }
.tabs { display: flex; }
.tabs button { padding: 0 11px 3px; height: 19px; border-right: 1px solid #d6d9db; }
.tabs button:last-child { border-right: 0; }
.acttab { position: relative; z-index: 1; height: 24px; width: 55px; margin: 0 0 -1px 7px; padding-bottom: 3px; border: 1px solid #c3c7ca; border-bottom: 0; background: #fbfbfb; color: #333; font-weight: bold; font-style: italic; }
.helpers { margin-left: auto; align-self: flex-start; display: flex; gap: 8px; padding: 4px 4px 0 0; }
.helpers button { display: flex; align-items: center; gap: 6px; }

/* ribbon */
.ribbon { display: flex; flex: none; margin: 0 4px; border: 1px solid #c3c7ca; border-right: 0; border-left: 0; height: 100px; }
.group { display: grid; grid-template-rows: 1fr 22px; flex: none; border-right: 1px solid #d3d6d8; }
.gbody { display: flex; padding-top: 2px; }
.glabel { display: flex; align-items: center; justify-content: center; gap: 4px; border-top: 1px solid #c8cbcd; background: #eff0f2; width: 100%; }
.g1 { width: 85px; border-left: 1px solid #c3c7ca; }
.g2 { width: 60px; }
.g3, .g4 { width: 71px; }
.g5 { width: 426px; }
.g6 { width: 159px; }
.g7 { width: 163px; }
.g8 { width: 100px; }
.g9 { width: 70px; }
.g10 { width: 87px; }
.group.rest { flex: 1; border-right: 0; }
.rows { display: grid; grid-template-rows: repeat(3, 24px); grid-auto-flow: column; grid-auto-columns: max-content; align-content: start; padding-left: 7px; }
.cmd { display: flex; align-items: center; gap: 4px; height: 24px; }
.cmd .caret { margin-left: 4px; }
.cmd.on, .gtool .on, .sbtns .on { background: linear-gradient(#d2d4d7, #e9eaec); box-shadow: inset 0 0 0 1px #b3b6b9, inset 0 2px 0 #9fa2a5; }
.big { display: flex; flex-direction: column; align-items: center; line-height: 14px; flex: 1; padding-top: 2px; }
.bi { width: 32px; height: 32px; flex: none; margin-bottom: 8px; }
.big.sel { line-height: 16px; }
.big.sel .caret { margin-top: 2px; }
.big.cons, .big.pal { flex: none; }
.big.cons { width: 46px; }
.gsep { width: 1px; margin: 10px 2px 12px; background: #d3d6d8; }
.sk { grid-template-columns: 66px 66px 66px 51px 72px; }
.pal { width: 46px; }
.ed { grid-template-columns: 52px; }
.co { grid-template-columns: 52px 48px 51px; padding-left: 6px; }
.co .cmd:nth-child(n+7) { padding-left: 5px; }
.big.nrm { flex: none; width: 44px; }
.g8 .rows { padding-left: 3px; }
.tri .cmd { width: 24px; justify-content: center; }
.tri { padding: 0 3px 0 0; }
.big.ok { flex: none; width: 40px; }
.g10 .gbody { padding-left: 3px; }

/* work area */
.work { display: flex; flex: 1; min-height: 0; }
.side { display: flex; flex-direction: column; width: 305px; flex: none; padding: 13px 1px 11px 4px; }
.stabs { display: flex; height: 29px; flex: none; }
.stabs button { width: 30px; display: grid; place-items: center; border: 1px solid #c3c7ca; border-bottom: 0; border-left: 0; background: #eff0f2; }
.stabs .cur { position: relative; z-index: 1; margin-bottom: -1px; border-left: 1px solid #c3c7ca; background: #fbfbfb; }
.panel { flex: 1; border: 1px solid #c3c7ca; border-width: 1px 3px 2px 1px; }
.phead { display: flex; align-items: center; gap: 9px; height: 29px; padding: 0 3px 0 20px; border-bottom: 1px solid #c8cbcd; }
.phead h2 { margin: 0 auto 0 0; font-size: 13px; }
.phead button { display: flex; align-items: center; gap: 9px; height: 20px; }
.phead button:last-child { margin-left: 3px; }
.tree { margin: 0; padding: 6px 0; list-style: none; color: #444; }
.tree li { display: flex; align-items: center; gap: 4px; height: 24px; padding-left: 29px; }
.tree .root { padding-left: 10px; }
.tree .star { width: 8px; height: 16px; margin: 0 -2px; }

.canvas { position: relative; flex: 1; margin-right: 4px; background: #001130; display: flex; justify-content: center; align-items: flex-start; padding-top: 7px; }
.drawing { position: absolute; inset: 0; width: 100%; height: 100%; }
.dims { fill: #c0c0c0; font-size: 15px; font-weight: 300; text-anchor: middle; }
.gtool { position: relative; display: flex; width: 340px; height: 28px; border: 1px solid #c9cccf; background: #e6e8ea; padding: 0 5px 0 4px; }
.gtool button { flex: 1; display: grid; place-items: center; background: #fff; border-left: 1px solid #c9cccf; position: relative; }
.gtool svg { width: 18px; height: 18px; }
.gtool .more::after { content: ""; position: absolute; right: 2px; bottom: 3px; width: 4px; height: 4px; background: #444; clip-path: polygon(100% 0, 100% 100%, 0 100%); }

/* status bar */
.status { display: flex; flex: none; height: 47px; border-top: 2px solid #999; background: linear-gradient(90deg, #555 calc(100% - 148px), #1562a8 calc(100% - 148px)) bottom / 100% 1px no-repeat, #eff0f2; }
.sbtns { display: flex; align-items: flex-end; gap: 4px; padding: 0 8px 3px 6px; }
.sbtns button { width: 22px; height: 22px; display: grid; place-items: center; border: 1px solid #c3c7ca; background: #f5f5f5; }
.msgs { border-left: 1px solid #d6d6d6; margin: 6px 0 3px; padding-left: 5px; color: #444; font-size: 11px; }
.msgs p { display: flex; align-items: center; margin: 0; gap: 1px; height: 16px; white-space: nowrap; }
.msgs svg { flex: none; }
.sright { margin-left: auto; display: flex; align-items: center; padding: 10px 18px 1px 0; }
.cell { height: 28px; display: flex; align-items: center; justify-content: center; border-left: 1px solid #ccc; }
.c1 { width: 31px; }
.c2 { width: 36px; }
.c3 { width: 41px; justify-content: flex-start; padding-left: 5px; }
.c4 { width: 47px; border-right: 1px solid #ccc; }
.find { width: 40px; height: 26px; display: grid; place-items: center; border: 1px solid #aaa; border-radius: 2px; background: linear-gradient(#fff, #eee); }
.pick { display: flex; width: 176px; height: 20px; margin-left: 96px; border: 1px solid #b0b4b7; background: #f7f7f7; }
.filter { flex: 1; appearance: none; padding: 0 7px; border: 0; border-radius: 0; background: none; color: #000; font: inherit; }
.drop { width: 15px; border-left: 1px solid #b0b4b7; display: grid; place-items: center; }

/* forum watermark */
.mark { position: absolute; right: 5px; bottom: 5px; z-index: 2; width: 206px; height: 62px; display: flex; background: rgba(255, 255, 255, .36); overflow: hidden; pointer-events: none; }
.rings { flex: none; margin: 3px 0 0 1px; }
.mtext { display: flex; flex-direction: column; align-items: flex-end; width: 144px; }
.mtext strong { font: 900 29px/32px "Noto Sans CJK SC", sans-serif; margin: 2px 18px 0 0; background: linear-gradient(#004536 18px, #9cd4b0 18px); -webkit-background-clip: text; background-clip: text; color: transparent; }
.mtext a { color: #b4dfd5; font-size: 15px; line-height: 20px; text-decoration: none; margin-top: 4px; }
```
